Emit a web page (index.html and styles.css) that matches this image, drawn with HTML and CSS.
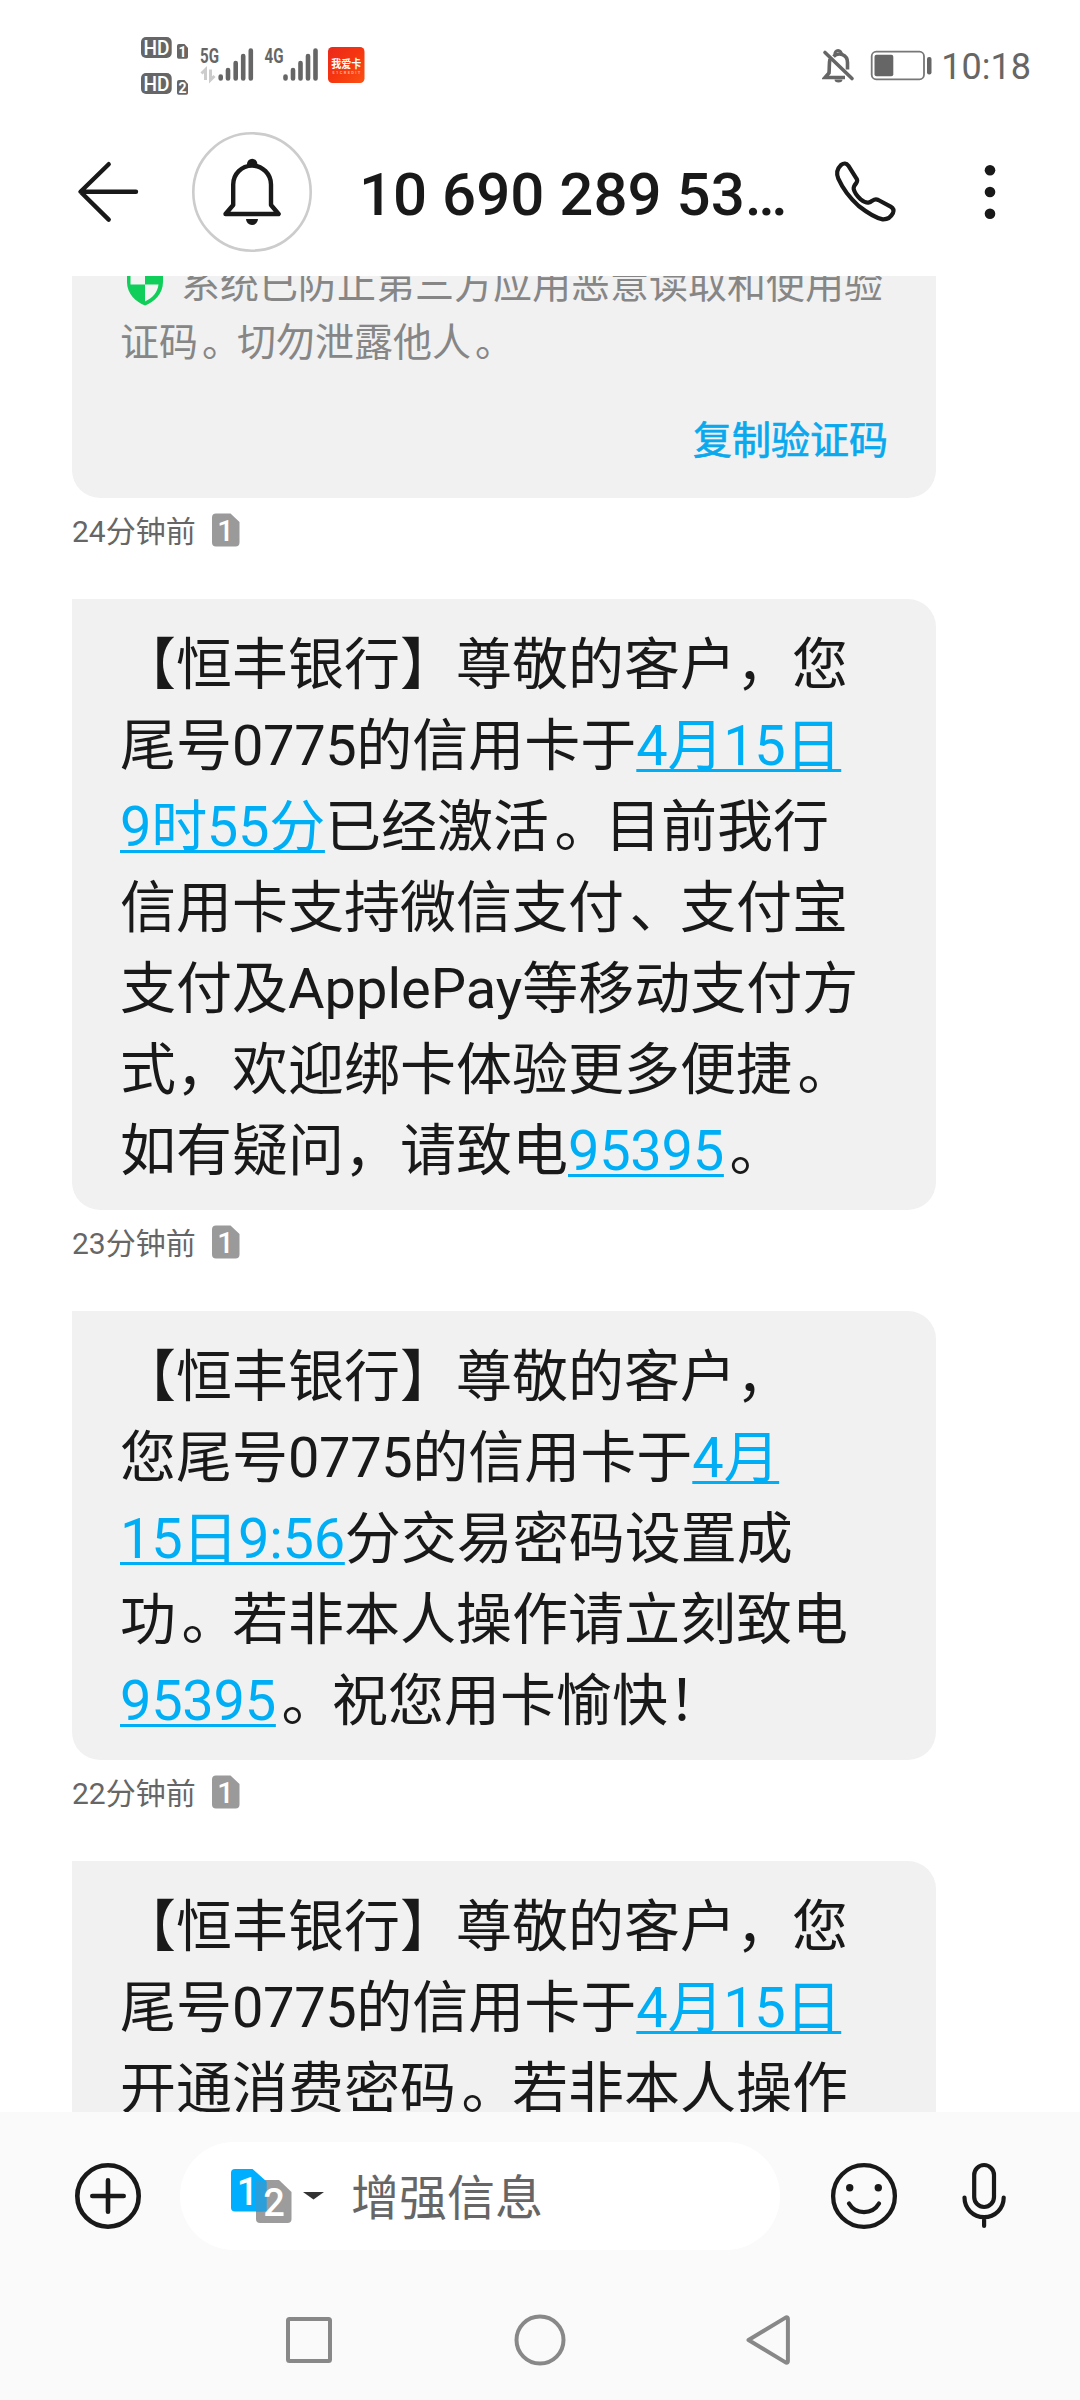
FILE: index.html
```
<!DOCTYPE html>
<html lang="zh-CN">
<head>
<meta charset="utf-8">
<title>信息</title>
<link rel="stylesheet" href="styles.css">
</head>
<body>
<div class="screen">
  <div class="status">
    <svg class="status-left" width="240" height="90" viewBox="130 20 240 90">
      <g fill="#666">
        <rect x="141" y="37" width="30.700" height="21" rx="5"/>
        <rect x="141" y="73" width="30.700" height="21" rx="5"/>
        <path d="M179 44h5.500l3.500 4v9a1.700 1.700 0 0 1-1.700 1.700h-7.600a1.700 1.700 0 0 1-1.700-1.700v-11a2 2 0 0 1 2-2z"/>
        <path d="M179 80h5.500l3.500 4v9a1.700 1.700 0 0 1-1.700 1.700h-7.600a1.700 1.700 0 0 1-1.700-1.700v-11a2 2 0 0 1 2-2z"/>
      </g>
      <g class="svg-hd" fill="#fff">
        <text x="143.500" y="55" textLength="26" lengthAdjust="spacingAndGlyphs">HD</text>
        <text x="143.500" y="91" textLength="26" lengthAdjust="spacingAndGlyphs">HD</text>
      </g>
      <g class="svg-num" fill="#fff" text-anchor="middle">
        <text x="182.500" y="56.500">1</text>
        <text x="182.500" y="92.500">2</text>
      </g>
      <g class="svg-net" fill="#666">
        <text x="200" y="62.700" textLength="19" lengthAdjust="spacingAndGlyphs">5G</text>
        <text x="264.500" y="62.700" textLength="19" lengthAdjust="spacingAndGlyphs">4G</text>
      </g>
      <path d="M201.500 73.500l4-4V80M214.500 76l-4 4V69.500" fill="none" stroke="#ccc" stroke-width="3"/>
      <g stroke="#666" stroke-width="4.600" stroke-linecap="round">
        <path d="M220.700 76.500v2M228 70v8.500M235.700 63v15.500M243.200 56v22.500M250.800 50.500v28"/>
        <path d="M285.500 76.500v2M293 70v8.500M300.500 63v15.500M308 56v22.500M315.500 50.500v28"/>
      </g>
      <defs><linearGradient id="app" x1="0" y1="0" x2="1" y2="1"><stop offset="0" stop-color="#ea2a1c"/><stop offset=".5" stop-color="#f5350f"/><stop offset="1" stop-color="#fb5212"/></linearGradient></defs>
      <rect x="328" y="47" width="36.500" height="36" rx="4.500" fill="url(#app)"/>
      <text class="svg-app" x="346.300" y="67.600" fill="#fff" text-anchor="middle" textLength="30" lengthAdjust="spacingAndGlyphs">我爱卡</text>
      <text class="svg-sub" x="346.300" y="73.500" fill="#ffb09c" text-anchor="middle" textLength="28">51CREDIT</text>
    </svg>
    <div class="status-right">
      <svg width="112" height="40" viewBox="822 45 112 40">
        <g fill="none" stroke="#666" stroke-width="3.600">
          <path d="M830 59c-1 4-.5 9-1 14l-4 4.500h20"/>
          <path d="M833.500 56.500c5-5 14-2 14 6v7"/>
          <path d="M835 55c-1-6 7-6 6.500 0" stroke-width="3"/>
          <path d="M825 52.500l27 26" stroke-linecap="round"/>
        </g>
        <path d="M834.500 79.500h8a4 3 0 0 1-8 0z" fill="#666"/>
        <rect x="871.700" y="51.700" width="52.300" height="27.600" rx="4.500" fill="none" stroke="#777" stroke-width="1.800"/>
        <rect x="874.500" y="54.700" width="18.800" height="21.500" rx="2" fill="#666"/>
        <rect x="927" y="57" width="4.500" height="17.500" rx="2" fill="#666"/>
      </svg>
      <span class="clock">10:18</span>
    </div>
  </div>
  <div class="header">
    <svg class="back" width="68" height="68" viewBox="74 158 68 68"><path d="M136 191.800H80.800M108.700 164.200L80.500 191.800L108.700 219.600" fill="none" stroke="#191919" stroke-width="4.400" stroke-linecap="round" stroke-linejoin="round"/></svg>
    <svg class="avatar" width="122" height="122" viewBox="191 131 122 122">
      <circle cx="252" cy="192" r="58.700" fill="#fff" stroke="#ccc" stroke-width="2.600"/>
      <path d="M225.500 214L233.200 205V184.500a18.900 18.900 0 0 1 37.800 0V205L278.600 214z" fill="none" stroke="#191919" stroke-width="4.400" stroke-linejoin="round"/>
      <path d="M247 167v-3a5.200 5.200 0 0 1 10.400 0v3zM246 219h12a6 6 0 0 1-12 0z" fill="#191919"/>
    </svg>
    <div class="title">10 690 289 53…</div>
    <svg class="phone" width="68" height="68" viewBox="842 113 204 204"><path d="M872 134Q885 124 894 136L918 174Q923 181 918 188Q909 198 910 206Q914 222 931 237Q945 248 954 247Q960 246 966 241Q975 235 984 239L1021 259Q1033 266 1028 278Q1018 298 997 297Q970 292 925 257Q884 220 864 175Q854 151 872 134z" fill="none" stroke="#191919" stroke-width="12.500" stroke-linejoin="round"/></svg>
    <svg class="more" width="12" height="56" viewBox="984 164 12 56" fill="#191919"><circle cx="990" cy="170.200" r="5.300"/><circle cx="990" cy="192" r="5.300"/><circle cx="990" cy="213.700" r="5.300"/></svg>
  </div>
  <div class="list">
    <div class="bubble first">
      <div class="notice"><svg class="shield" width="38" height="46" viewBox="0 0 38 46"><path d="M19 .5L37 6v16c0 12-9 20-18 23.500C10 42 1 34 1 22V6z" fill="#0fce59"/><path d="M19 5v19.500H4.500V9zM19 24.500H32.500c-1 8-6 13.500-13.500 17z" fill="#f4f4f4"/></svg><span>系统已防止第三方应用恶意读取和使用验</span><br>证码<i>。</i>切勿泄露他人<i>。</i></div>
      <div class="copy">复制验证码</div>
    </div>
    <div class="meta"><span>24分钟前</span><svg class="sim" width="28" height="34" viewBox="0 0 28 34"><path d="M4 .5h14.500L27.500 9v20.500a4 4 0 0 1-4 4H4a4 4 0 0 1-4-4v-25a4 4 0 0 1 4-4z" fill="#9a9a9a"/><text x="13.500" y="27.500" text-anchor="middle">1</text></svg></div>
    <div class="bubble">【恒丰银行】尊敬的客户，您<br>尾号<b>0775</b>的信用卡于<a>4月15日</a><br><a>9时55分</a>已经激活<i>。</i>目前我行<br>信用卡支持微信支付<i>、</i>支付宝<br>支付及ApplePay等移动支付方<br>式，欢迎绑卡体验更多便捷<i>。</i><br>如有疑问，请致电<a>95395</a><i>。</i></div>
    <div class="meta"><span>23分钟前</span><svg class="sim" width="28" height="34" viewBox="0 0 28 34"><path d="M4 .5h14.500L27.500 9v20.500a4 4 0 0 1-4 4H4a4 4 0 0 1-4-4v-25a4 4 0 0 1 4-4z" fill="#9a9a9a"/><text x="13.500" y="27.500" text-anchor="middle">1</text></svg></div>
    <div class="bubble">【恒丰银行】尊敬的客户，<br>您尾号<b>0775</b>的信用卡于<a>4月</a><br><a>15日9:56</a>分交易密码设置成<br>功<i>。</i>若非本人操作请立刻致电<br><a>95395</a><i>。</i>祝您用卡愉快！</div>
    <div class="meta"><span>22分钟前</span><svg class="sim" width="28" height="34" viewBox="0 0 28 34"><path d="M4 .5h14.500L27.500 9v20.500a4 4 0 0 1-4 4H4a4 4 0 0 1-4-4v-25a4 4 0 0 1 4-4z" fill="#9a9a9a"/><text x="13.500" y="27.500" text-anchor="middle">1</text></svg></div>
    <div class="bubble">【恒丰银行】尊敬的客户，您<br>尾号<b>0775</b>的信用卡于<a>4月15日</a><br>开通消费密码<i>。</i>若非本人操作</div>
  </div>
  <div class="composer">
    <svg class="plus" width="68" height="68" viewBox="-34 -34 68 68" fill="none" stroke="#191919" stroke-width="4.600" stroke-linecap="round"><circle r="30.700"/><path d="M0-15.600v31.400M-15.700 0h31.400"/></svg>
    <div class="field">
      <svg class="sims" width="96" height="58" viewBox="230 2167 96 58">
        <path d="M260 2180h19l12.500 12v27a4 4 0 0 1-4 4h-27.500a4 4 0 0 1-4-4v-35a4 4 0 0 1 4-4z" fill="#9c9c9c"/>
        <path d="M235 2169h17.500L266 2181v26.500a4 4 0 0 1-4 4h-27a4 4 0 0 1-4-4v-34.500a4 4 0 0 1 4-4z" fill="#00aeff"/>
        <path d="M256 2211.500v-31h4l6.700 1v30z" fill="#2b9fd9"/>
        <text x="247.500" y="2205" text-anchor="middle">1</text>
        <text x="274" y="2216" text-anchor="middle">2</text>
        <path d="M303 2192h21l-10.500 7.500z" fill="#333"/>
      </svg>
      <span class="placeholder">增强信息</span>
    </div>
    <svg class="smile" width="68" height="68" viewBox="-34 -34 68 68" fill="none" stroke="#191919" stroke-width="4.300" stroke-linecap="round"><circle r="30.900"/><path d="M-15 7.500C-8.200 19 8.200 19 15 7.500"/><g fill="#191919" stroke="none"><circle cx="-14.300" cy="-8.200" r="3.700"/><circle cx="14.300" cy="-8.200" r="3.700"/></g></svg>
    <svg class="mic" width="48" height="68" viewBox="954 2162 48 68" fill="none" stroke="#191919" stroke-width="4.200" stroke-linecap="round"><rect x="968.200" y="2165" width="19.800" height="42" rx="9.900"/><path d="M958.500 2197.500c0 11 8.600 19.600 19.600 19.600s19.600-8.600 19.600-19.600M978.100 2218v8"/></svg>
  </div>
  <div class="nav">
    <svg width="52" height="56" viewBox="-25 -28 52 56"><rect x="-21" y="-21" width="42" height="42" rx="1.500" fill="none" stroke="#888" stroke-width="4"/></svg>
    <svg width="56" height="56" viewBox="-28 -28 56 56"><circle r="23.500" fill="none" stroke="#888" stroke-width="4"/></svg>
    <svg width="52" height="56" viewBox="741 2312 52 56"><path d="M746.500 2340L784 2317.400Q785.900 2317 785.900 2319V2361Q785.900 2363 784 2362.600z" fill="none" stroke="#888" stroke-width="4" stroke-linejoin="round"/></svg>
  </div>
</div>
</body>
</html>
```
FILE: styles.css
```
* { box-sizing: border-box; }
body { margin: 0; background: #fff; }
svg { display: block; flex: none; }
.screen {
  width: 1080px; height: 2400px; overflow: hidden;
  display: flex; flex-direction: column;
  font-family: Roboto, "Noto Sans CJK SC", sans-serif;
  color: #191919; background: #fff; white-space: nowrap;
}
.status {
  height: 130px; flex: none; padding: 0 49px 0 130px;
  display: flex; justify-content: space-between; align-items: center;
}
.svg-hd { font: 500 20px Roboto, sans-serif; }
.svg-num { font: 700 14px Roboto, sans-serif; }
.svg-net { font: 700 20px Roboto, sans-serif; }
.svg-app { font: 700 11px "Noto Sans CJK SC", sans-serif; }
.svg-sub { font: 700 4px Roboto, sans-serif; }
.status-right { display: flex; align-items: center; gap: 7px; color: #666; }
.clock { font-size: 36px; line-height: 42px; padding-top: 3px; }
.header {
  height: 146px; flex: none; padding: 0 84px 22px 74px;
  display: flex; align-items: center;
}
.avatar { margin-left: 49px; }
.title {
  width: 425px; margin-left: 46px; padding-top: 5px;
  font-size: 60px; font-weight: 500; line-height: 80px;
}
.phone { margin-left: 47px; }
.more { margin-left: 85px; }
.list { height: 1836px; flex: none; overflow: hidden; padding-left: 72px; }
.bubble {
  width: 864px; padding: 26px 48px 18px 48px;
  background: #f1f1f1; border-radius: 0 28px 28px 28px;
  font-size: 56px; line-height: 81px;
}
.bubble a {
  color: #00aef5; letter-spacing: -.3px; text-decoration: underline;
  text-decoration-thickness: 3px; text-underline-offset: 4px; text-decoration-skip-ink: none;
}
.bubble b { font-weight: 400; letter-spacing: -.4px; }
/* low punctuation sits a little further right in its cell */
.bubble i { font-style: normal; margin: 0 -.1em 0 .1em; }
.first {
  display: flow-root;
  height: 222px; padding-top: 0; border-radius: 0 0 28px 28px;
  font-size: 39px; line-height: 58px;
}
.notice { margin-top: -20px; color: #868686; }
.shield { display: inline-block; vertical-align: top; margin: 4px 17px 0 6px; }
.copy { margin-top: 40px; text-align: right; color: #0aa9ee; -webkit-text-stroke: .7px #0aa9ee; }
.meta {
  height: 101px; padding-top: 14px;
  display: flex; align-items: flex-start; gap: 16px;
  font-size: 30px; line-height: 40px; color: #666;
}
.sim { margin-top: 1px; }
.sim text { font: 500 29px Roboto, sans-serif; fill: #fff; }
.composer {
  height: 168px; flex: none; padding-left: 74px; background: #fafafa;
  display: flex; align-items: center;
}
.field {
  width: 600px; height: 108px; margin-left: 38px; padding-left: 50px;
  display: flex; align-items: center; gap: 25px;
  border-radius: 54px; background: #fff;
}
.sims text { font: 500 38px Roboto, sans-serif; fill: #fff; }
.placeholder { font-size: 48px; line-height: 60px; padding-top: 5px; color: #666; }
.smile { margin-left: 50px; }
.mic { margin-left: 62px; }
.nav {
  height: 120px; flex: none; padding: 0 285px 0 284px; background: #fafafa;
  display: flex; justify-content: space-between; align-items: center;
}
```
